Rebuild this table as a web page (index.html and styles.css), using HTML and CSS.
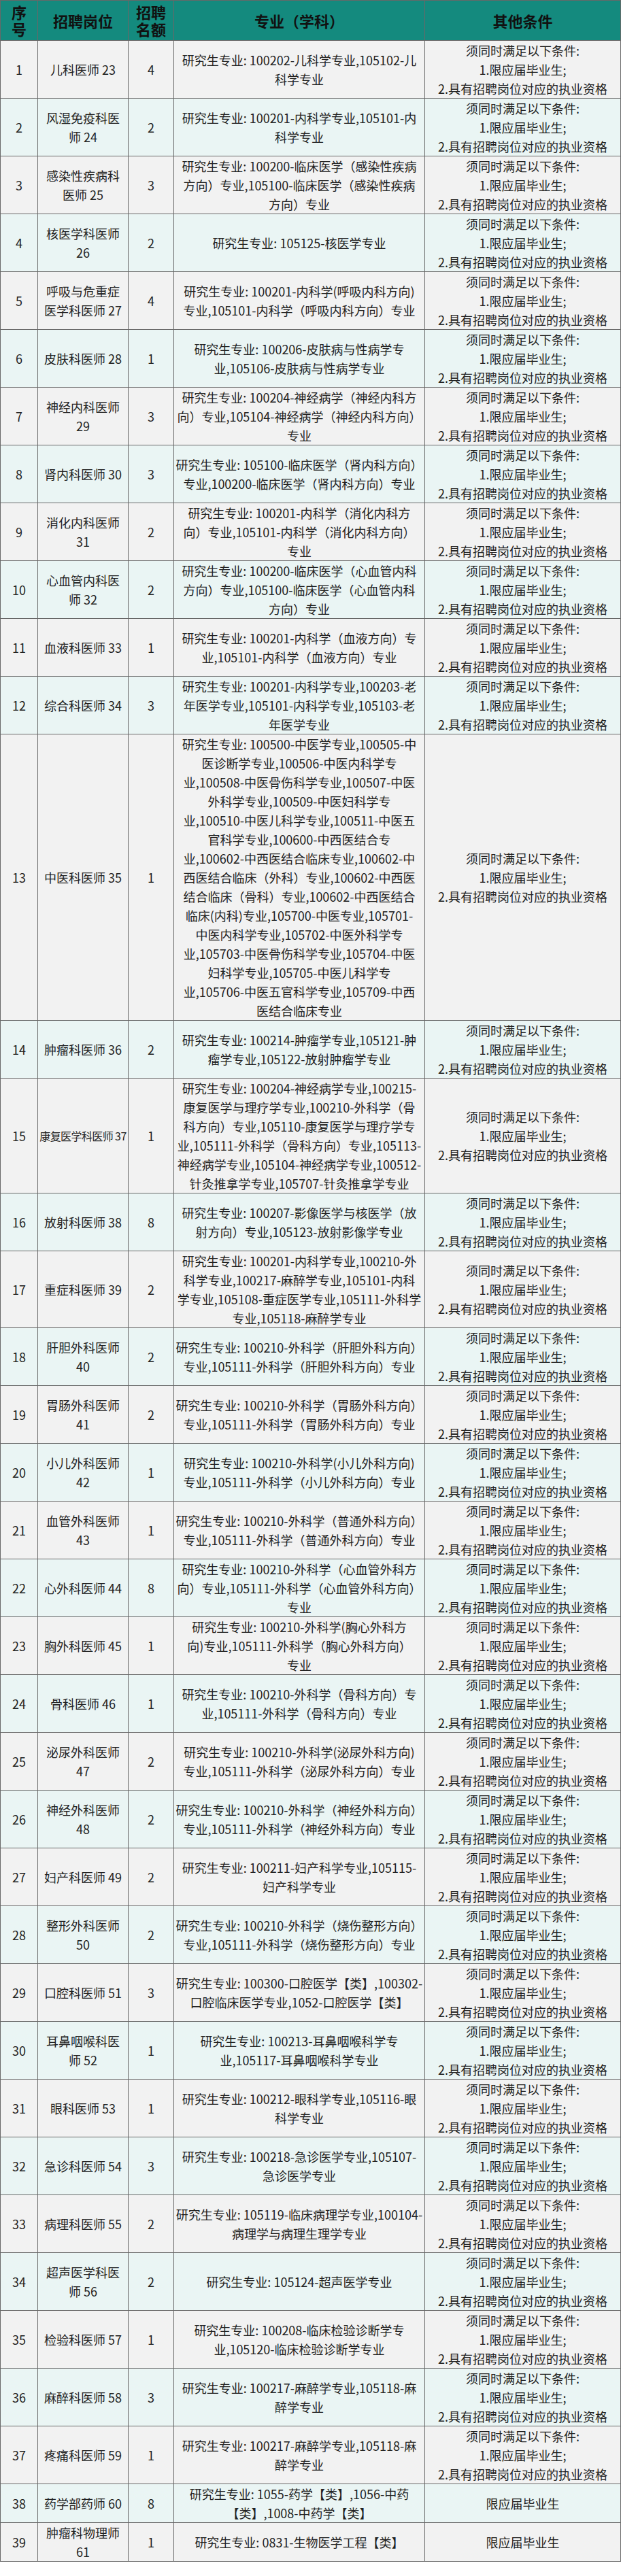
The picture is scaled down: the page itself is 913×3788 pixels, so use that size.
FILE: index.html
```html
<!DOCTYPE html>
<html lang="zh-CN">
<head>
<meta charset="utf-8">
<title>招聘岗位</title>
<link rel="stylesheet" href="styles.css">
</head>
<body>
<table class="jobs">
<colgroup>
<col class="c-no"><col class="c-post"><col class="c-num"><col class="c-major"><col class="c-cond">
</colgroup>
<thead>
<tr><th>序<br>号</th><th>招聘岗位</th><th>招聘<br>名额</th><th>专业（学科）</th><th>其他条件</th></tr>
</thead>
<tbody>
<tr><td>1</td><td>儿科医师 23</td><td>4</td><td>研究生专业: 100202-儿科学专业,105102-儿<br>科学专业</td><td>须同时满足以下条件:<br>1.限应届毕业生;<br>2.具有招聘岗位对应的执业资格</td></tr>
<tr><td>2</td><td>风湿免疫科医<br>师 24</td><td>2</td><td>研究生专业: 100201-内科学专业,105101-内<br>科学专业</td><td>须同时满足以下条件:<br>1.限应届毕业生;<br>2.具有招聘岗位对应的执业资格</td></tr>
<tr><td>3</td><td>感染性疾病科<br>医师 25</td><td>3</td><td>研究生专业: 100200-临床医学（感染性疾病<br>方向）专业,105100-临床医学（感染性疾病<br>方向）专业</td><td>须同时满足以下条件:<br>1.限应届毕业生;<br>2.具有招聘岗位对应的执业资格</td></tr>
<tr><td>4</td><td>核医学科医师<br>26</td><td>2</td><td>研究生专业: 105125-核医学专业</td><td>须同时满足以下条件:<br>1.限应届毕业生;<br>2.具有招聘岗位对应的执业资格</td></tr>
<tr><td>5</td><td>呼吸与危重症<br>医学科医师 27</td><td>4</td><td>研究生专业: 100201-内科学(呼吸内科方向)<br>专业,105101-内科学（呼吸内科方向）专业</td><td>须同时满足以下条件:<br>1.限应届毕业生;<br>2.具有招聘岗位对应的执业资格</td></tr>
<tr><td>6</td><td>皮肤科医师 28</td><td>1</td><td>研究生专业: 100206-皮肤病与性病学专<br>业,105106-皮肤病与性病学专业</td><td>须同时满足以下条件:<br>1.限应届毕业生;<br>2.具有招聘岗位对应的执业资格</td></tr>
<tr><td>7</td><td>神经内科医师<br>29</td><td>3</td><td>研究生专业: 100204-神经病学（神经内科方<br>向）专业,105104-神经病学（神经内科方向）<br>专业</td><td>须同时满足以下条件:<br>1.限应届毕业生;<br>2.具有招聘岗位对应的执业资格</td></tr>
<tr><td>8</td><td>肾内科医师 30</td><td>3</td><td>研究生专业: 105100-临床医学（肾内科方向）<br>专业,100200-临床医学（肾内科方向）专业</td><td>须同时满足以下条件:<br>1.限应届毕业生;<br>2.具有招聘岗位对应的执业资格</td></tr>
<tr><td>9</td><td>消化内科医师<br>31</td><td>2</td><td>研究生专业: 100201-内科学（消化内科方<br>向）专业,105101-内科学（消化内科方向）<br>专业</td><td>须同时满足以下条件:<br>1.限应届毕业生;<br>2.具有招聘岗位对应的执业资格</td></tr>
<tr><td>10</td><td>心血管内科医<br>师 32</td><td>2</td><td>研究生专业: 100200-临床医学（心血管内科<br>方向）专业,105100-临床医学（心血管内科<br>方向）专业</td><td>须同时满足以下条件:<br>1.限应届毕业生;<br>2.具有招聘岗位对应的执业资格</td></tr>
<tr><td>11</td><td>血液科医师 33</td><td>1</td><td>研究生专业: 100201-内科学（血液方向）专<br>业,105101-内科学（血液方向）专业</td><td>须同时满足以下条件:<br>1.限应届毕业生;<br>2.具有招聘岗位对应的执业资格</td></tr>
<tr><td>12</td><td>综合科医师 34</td><td>3</td><td>研究生专业: 100201-内科学专业,100203-老<br>年医学专业,105101-内科学专业,105103-老<br>年医学专业</td><td>须同时满足以下条件:<br>1.限应届毕业生;<br>2.具有招聘岗位对应的执业资格</td></tr>
<tr><td>13</td><td>中医科医师 35</td><td>1</td><td>研究生专业: 100500-中医学专业,100505-中<br>医诊断学专业,100506-中医内科学专<br>业,100508-中医骨伤科学专业,100507-中医<br>外科学专业,100509-中医妇科学专<br>业,100510-中医儿科学专业,100511-中医五<br>官科学专业,100600-中西医结合专<br>业,100602-中西医结合临床专业,100602-中<br>西医结合临床（外科）专业,100602-中西医<br>结合临床（骨科）专业,100602-中西医结合<br>临床(内科)专业,105700-中医专业,105701-<br>中医内科学专业,105702-中医外科学专<br>业,105703-中医骨伤科学专业,105704-中医<br>妇科学专业,105705-中医儿科学专<br>业,105706-中医五官科学专业,105709-中西<br>医结合临床专业</td><td>须同时满足以下条件:<br>1.限应届毕业生;<br>2.具有招聘岗位对应的执业资格</td></tr>
<tr><td>14</td><td>肿瘤科医师 36</td><td>2</td><td>研究生专业: 100214-肿瘤学专业,105121-肿<br>瘤学专业,105122-放射肿瘤学专业</td><td>须同时满足以下条件:<br>1.限应届毕业生;<br>2.具有招聘岗位对应的执业资格</td></tr>
<tr><td>15</td><td class="tight">康复医学科医师 37</td><td>1</td><td>研究生专业: 100204-神经病学专业,100215-<br>康复医学与理疗学专业,100210-外科学（骨<br>科方向）专业,105110-康复医学与理疗学专<br>业,105111-外科学（骨科方向）专业,105113-<br>神经病学专业,105104-神经病学专业,100512-<br>针灸推拿学专业,105707-针灸推拿学专业</td><td>须同时满足以下条件:<br>1.限应届毕业生;<br>2.具有招聘岗位对应的执业资格</td></tr>
<tr><td>16</td><td>放射科医师 38</td><td>8</td><td>研究生专业: 100207-影像医学与核医学（放<br>射方向）专业,105123-放射影像学专业</td><td>须同时满足以下条件:<br>1.限应届毕业生;<br>2.具有招聘岗位对应的执业资格</td></tr>
<tr><td>17</td><td>重症科医师 39</td><td>2</td><td>研究生专业: 100201-内科学专业,100210-外<br>科学专业,100217-麻醉学专业,105101-内科<br>学专业,105108-重症医学专业,105111-外科学<br>专业,105118-麻醉学专业</td><td>须同时满足以下条件:<br>1.限应届毕业生;<br>2.具有招聘岗位对应的执业资格</td></tr>
<tr><td>18</td><td>肝胆外科医师<br>40</td><td>2</td><td>研究生专业: 100210-外科学（肝胆外科方向）<br>专业,105111-外科学（肝胆外科方向）专业</td><td>须同时满足以下条件:<br>1.限应届毕业生;<br>2.具有招聘岗位对应的执业资格</td></tr>
<tr><td>19</td><td>胃肠外科医师<br>41</td><td>2</td><td>研究生专业: 100210-外科学（胃肠外科方向）<br>专业,105111-外科学（胃肠外科方向）专业</td><td>须同时满足以下条件:<br>1.限应届毕业生;<br>2.具有招聘岗位对应的执业资格</td></tr>
<tr><td>20</td><td>小儿外科医师<br>42</td><td>1</td><td>研究生专业: 100210-外科学(小儿外科方向)<br>专业,105111-外科学（小儿外科方向）专业</td><td>须同时满足以下条件:<br>1.限应届毕业生;<br>2.具有招聘岗位对应的执业资格</td></tr>
<tr><td>21</td><td>血管外科医师<br>43</td><td>1</td><td>研究生专业: 100210-外科学（普通外科方向）<br>专业,105111-外科学（普通外科方向）专业</td><td>须同时满足以下条件:<br>1.限应届毕业生;<br>2.具有招聘岗位对应的执业资格</td></tr>
<tr><td>22</td><td>心外科医师 44</td><td>8</td><td>研究生专业: 100210-外科学（心血管外科方<br>向）专业,105111-外科学（心血管外科方向）<br>专业</td><td>须同时满足以下条件:<br>1.限应届毕业生;<br>2.具有招聘岗位对应的执业资格</td></tr>
<tr><td>23</td><td>胸外科医师 45</td><td>1</td><td>研究生专业: 100210-外科学(胸心外科方<br>向)专业,105111-外科学（胸心外科方向）<br>专业</td><td>须同时满足以下条件:<br>1.限应届毕业生;<br>2.具有招聘岗位对应的执业资格</td></tr>
<tr><td>24</td><td>骨科医师 46</td><td>1</td><td>研究生专业: 100210-外科学（骨科方向）专<br>业,105111-外科学（骨科方向）专业</td><td>须同时满足以下条件:<br>1.限应届毕业生;<br>2.具有招聘岗位对应的执业资格</td></tr>
<tr><td>25</td><td>泌尿外科医师<br>47</td><td>2</td><td>研究生专业: 100210-外科学(泌尿外科方向)<br>专业,105111-外科学（泌尿外科方向）专业</td><td>须同时满足以下条件:<br>1.限应届毕业生;<br>2.具有招聘岗位对应的执业资格</td></tr>
<tr><td>26</td><td>神经外科医师<br>48</td><td>2</td><td>研究生专业: 100210-外科学（神经外科方向）<br>专业,105111-外科学（神经外科方向）专业</td><td>须同时满足以下条件:<br>1.限应届毕业生;<br>2.具有招聘岗位对应的执业资格</td></tr>
<tr><td>27</td><td>妇产科医师 49</td><td>2</td><td>研究生专业: 100211-妇产科学专业,105115-<br>妇产科学专业</td><td>须同时满足以下条件:<br>1.限应届毕业生;<br>2.具有招聘岗位对应的执业资格</td></tr>
<tr><td>28</td><td>整形外科医师<br>50</td><td>2</td><td>研究生专业: 100210-外科学（烧伤整形方向）<br>专业,105111-外科学（烧伤整形方向）专业</td><td>须同时满足以下条件:<br>1.限应届毕业生;<br>2.具有招聘岗位对应的执业资格</td></tr>
<tr><td>29</td><td>口腔科医师 51</td><td>3</td><td>研究生专业: 100300-口腔医学【类】,100302-<br>口腔临床医学专业,1052-口腔医学【类】</td><td>须同时满足以下条件:<br>1.限应届毕业生;<br>2.具有招聘岗位对应的执业资格</td></tr>
<tr><td>30</td><td>耳鼻咽喉科医<br>师 52</td><td>1</td><td>研究生专业: 100213-耳鼻咽喉科学专<br>业,105117-耳鼻咽喉科学专业</td><td>须同时满足以下条件:<br>1.限应届毕业生;<br>2.具有招聘岗位对应的执业资格</td></tr>
<tr><td>31</td><td>眼科医师 53</td><td>1</td><td>研究生专业: 100212-眼科学专业,105116-眼<br>科学专业</td><td>须同时满足以下条件:<br>1.限应届毕业生;<br>2.具有招聘岗位对应的执业资格</td></tr>
<tr><td>32</td><td>急诊科医师 54</td><td>3</td><td>研究生专业: 100218-急诊医学专业,105107-<br>急诊医学专业</td><td>须同时满足以下条件:<br>1.限应届毕业生;<br>2.具有招聘岗位对应的执业资格</td></tr>
<tr><td>33</td><td>病理科医师 55</td><td>2</td><td>研究生专业: 105119-临床病理学专业,100104-<br>病理学与病理生理学专业</td><td>须同时满足以下条件:<br>1.限应届毕业生;<br>2.具有招聘岗位对应的执业资格</td></tr>
<tr><td>34</td><td>超声医学科医<br>师 56</td><td>2</td><td>研究生专业: 105124-超声医学专业</td><td>须同时满足以下条件:<br>1.限应届毕业生;<br>2.具有招聘岗位对应的执业资格</td></tr>
<tr><td>35</td><td>检验科医师 57</td><td>1</td><td>研究生专业: 100208-临床检验诊断学专<br>业,105120-临床检验诊断学专业</td><td>须同时满足以下条件:<br>1.限应届毕业生;<br>2.具有招聘岗位对应的执业资格</td></tr>
<tr><td>36</td><td>麻醉科医师 58</td><td>3</td><td>研究生专业: 100217-麻醉学专业,105118-麻<br>醉学专业</td><td>须同时满足以下条件:<br>1.限应届毕业生;<br>2.具有招聘岗位对应的执业资格</td></tr>
<tr><td>37</td><td>疼痛科医师 59</td><td>1</td><td>研究生专业: 100217-麻醉学专业,105118-麻<br>醉学专业</td><td>须同时满足以下条件:<br>1.限应届毕业生;<br>2.具有招聘岗位对应的执业资格</td></tr>
<tr><td>38</td><td>药学部药师 60</td><td>8</td><td>研究生专业: 1055-药学【类】,1056-中药<br>【类】,1008-中药学【类】</td><td>限应届毕业生</td></tr>
<tr><td>39</td><td>肿瘤科物理师<br>61</td><td>1</td><td>研究生专业: 0831-生物医学工程【类】</td><td>限应届毕业生</td></tr>
</tbody>
</table>
</body>
</html>
```

FILE: styles.css
```css
html, body {
  margin: 0;
  padding: 0;
  background: #ffffff;
}

.jobs {
  border-collapse: collapse;
  table-layout: fixed;
  width: 912px;
  font-family: "Noto Sans CJK SC", "Noto Sans", sans-serif;
  color: #222222;
}

.c-no { width: 55px; }
.c-post { width: 133px; }
.c-num { width: 67px; }
.c-major { width: 369px; }
.c-cond { width: 288px; }

.jobs th,
.jobs td {
  border: 1px solid #686868;
  text-align: center;
  vertical-align: middle;
  white-space: nowrap;
  overflow: hidden;
}

.jobs th {
  background: #148a7e;
  color: #111111;
  font-size: 22px;
  line-height: 25px;
  font-weight: 700;
  padding: 4px 0 4px;
  height: 50px;
}

.jobs td {
  font-size: 18px;
  line-height: 28px;
  padding: 0;
}

.jobs td.tight {
  font-size: 16px;
  letter-spacing: -0.6px;
}

.jobs tbody tr:nth-child(odd) td { background: #f2f2f2; }
.jobs tbody tr:nth-child(even) td { background: #eaf5f4; }
```
